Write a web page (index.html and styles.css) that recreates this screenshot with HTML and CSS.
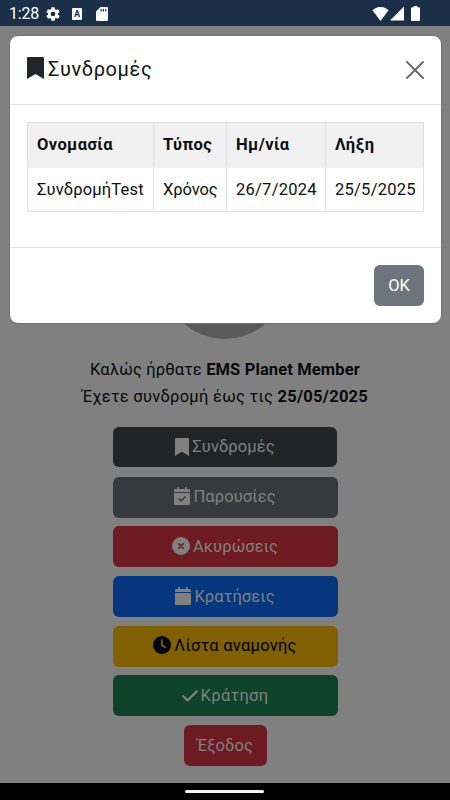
FILE: index.html
```html
<!DOCTYPE html>
<html lang="el">
<head>
<meta charset="utf-8">
<meta name="viewport" content="width=device-width, initial-scale=1">
<title>Συνδρομές</title>
<link rel="stylesheet" href="styles.css">
</head>
<body>
<header class="status">
  <span class="time">1:28</span>
  <svg class="gear" viewBox="2 2 20 20"><path fill-rule="evenodd" d="M19.14 12.94c.04-.3.06-.61.06-.94s-.02-.64-.07-.94l2.03-1.58c.18-.14.23-.41.12-.61l-1.92-3.32c-.12-.22-.37-.29-.59-.22l-2.39.96c-.5-.38-1.03-.7-1.62-.94l-.36-2.54c-.04-.24-.24-.41-.48-.41h-3.84c-.24 0-.43.17-.47.41l-.36 2.54c-.59.24-1.13.57-1.62.94l-2.39-.96c-.22-.08-.47 0-.59.22L2.74 8.87c-.12.21-.08.47.12.61l2.03 1.58c-.05.3-.09.63-.09.94s.02.64.07.94l-2.03 1.58c-.18.14-.23.41-.12.61l1.92 3.32c.12.22.37.29.59.22l2.39-.96c.5.38 1.03.7 1.62.94l.36 2.54c.05.24.24.41.48.41h3.84c.24 0 .44-.17.47-.41l.36-2.54c.59-.24 1.13-.56 1.62-.94l2.39.96c.22.08.47 0 .59-.22l1.92-3.32c.12-.22.07-.47-.12-.61zM12 15.3a3.3 3.3 0 1 1 0-6.6 3.3 3.3 0 0 1 0 6.6z"/></svg>
  <span class="lang">A</span>
  <svg class="sd" viewBox="0 0 12 14"><path fill-rule="evenodd" d="M4.5 0H10.7Q12 0 12 1.3V12.7Q12 14 10.7 14H1.3Q0 14 0 12.7V4.5zM4.5 2V4.5H5.7V2zM6.8 2V4.5H8V2zM9.1 2V4.5H10.3V2z"/></svg>
  <svg class="wifi" viewBox="0 0 16 14"><path d="M0 3.2C4.6-1.1 11.4-1.1 16 3.2L8 14z"/></svg>
  <svg class="cell" viewBox="0 0 14 14"><path d="M14 0V14H0z"/></svg>
  <svg class="battery" viewBox="0 0 9 15"><path d="M2.7 0H6.3V1.3H8Q9 1.3 9 2.3V14Q9 15 8 15H1Q0 15 0 14V2.3Q0 1.3 1 1.3H2.7z"/></svg>
</header>

<main class="page">
  <div class="avatar"></div>
  <p class="welcome"><span class="w1">Καλώς ήρθατε <b>EMS Planet Member</b></span><span class="w2">Έχετε συνδρομή έως τις <b>25/05/2025</b></span></p>
  <nav class="actions">
    <button class="btn dark"><svg class="i-mark" viewBox="0 0 14 18"><path d="M0 1Q0 0 1 0H13Q14 0 14 1V18L7 13.7 0 18z"/></svg><span>Συνδρομές</span></button>
    <button class="btn grey"><svg class="i-cal" viewBox="0 0 16 18"><path fill-rule="evenodd" d="M3.3 0H5V2H11V0H12.7V2H14.7Q16 2 16 3.5V5H0V3.5Q0 2 1.3 2H3.3zM0 6H16V16.4Q16 18 14.4 18H1.6Q0 18 0 16.4z"/><path class="cut" d="M5 11.8L7.3 14 11.3 9.8"/></svg><span>Παρουσίες</span></button>
    <button class="btn red"><svg class="i-round" viewBox="0 0 18 18"><circle cx="9" cy="9" r="9"/><path class="cut" d="M6.9 6.9L11.1 11.1M11.1 6.9L6.9 11.1"/></svg><span>Ακυρώσεις</span></button>
    <button class="btn blue"><svg class="i-cal" viewBox="0 0 16 18"><path d="M3.3 0H5V2H11V0H12.7V2H14.7Q16 2 16 3.5V5H0V3.5Q0 2 1.3 2H3.3zM0 6H16V16.4Q16 18 14.4 18H1.6Q0 18 0 16.4z"/></svg><span>Κρατήσεις</span></button>
    <button class="btn yellow"><svg class="i-round" viewBox="0 0 18 18"><circle cx="9" cy="9" r="9"/><path class="cut" d="M8.8 4V9.2L12.2 11.3"/></svg><span class="wait">Λίστα αναμονής</span></button>
    <button class="btn green"><svg class="i-check" viewBox="0 0 16 12"><path d="M1.2 6.2L5.5 10.5 14.8 1.2"/></svg><span class="book">Κράτηση</span></button>
    <button class="btn red exit"><span>Έξοδος</span></button>
  </nav>
</main>
<footer class="navbar"><span class="pill"></span></footer>

<section class="modal">
  <div class="m-head">
    <svg class="m-mark" viewBox="0 0 17 22"><path d="M0 1.2Q0 0 1.2 0H15.8Q17 0 17 1.2V22L8.5 17 0 22z"/></svg>
    <h1>Συνδρομές</h1>
    <svg class="close" viewBox="0 0 18 18"><path d="M1 1L17 17M17 1L1 17"/></svg>
  </div>
  <div class="m-body">
    <table>
      <colgroup><col class="c1"><col class="c2"><col class="c3"><col class="c4"></colgroup>
      <tr><th>Ονομασία</th><th>Τύπος</th><th>Ημ/νία</th><th>Λήξη</th></tr>
      <tr><td class="name">ΣυνδρομήTest</td><td class="type">Χρόνος</td><td class="date">26/7/2024</td><td class="date">25/5/2025</td></tr>
    </table>
  </div>
  <div class="m-foot"><button class="ok">OK</button></div>
</section>
</body>
</html>
```
FILE: styles.css
```css
* { box-sizing: border-box; }
body {
  margin: 0;
  width: 450px;
  height: 800px;
  overflow: hidden;
  position: relative;
  display: flex;
  flex-direction: column;
  background: #808080;
  color: #08090a;
  font: 400 16.5px/26px Roboto, "Noto Sans", sans-serif;
}
svg { display: block; flex: none; fill: currentColor; }
button { font: inherit; border: 0; padding: 0; }
span { white-space: nowrap; }

.status { height: 26px; flex: none; display: flex; align-items: center; background: #1b3048; color: #fff; padding: 1px 30px 0 9px; }
.time { width: 37px; font-size: 16px; letter-spacing: -.2px; }
.gear { width: 14px; height: 14px; }
.lang { width: 10px; height: 12px; margin-left: 12px; background: #fff; color: #1b3048; border-radius: 1px; font: bold 9px/12px Roboto, sans-serif; text-align: center; }
.sd { width: 12px; height: 14px; margin-left: 14px; }
.wifi { width: 17px; height: 14px; margin-left: auto; }
.cell { width: 14px; height: 15px; margin-left: 1px; }
.battery { width: 9px; height: 15px; margin-left: 7px; }

.page { flex: 1; min-height: 0; display: flex; flex-direction: column; align-items: center; padding-top: 191px; }
.avatar { width: 122px; height: 122px; flex: none; border-radius: 50%; background: #5a5a5a; }
.welcome { margin: 18px 0 17px; display: flex; flex-direction: column; align-items: center; line-height: 26.5px; }
.w1 { letter-spacing: .13px; }
.w2 { letter-spacing: .27px; }
.actions { display: flex; flex-direction: column; align-items: center; gap: 8.7px; }
.btn { width: 225px; height: 41px; flex: none; display: flex; align-items: center; justify-content: center; gap: 3px; border-radius: 6px; color: #808080; letter-spacing: .1px; }
.dark { background: #212426; width: 224px; height: 40px; margin-bottom: 1px; }
.grey { background: #363a3f; }
.red { background: #6e1a22; }
.blue { background: #06377e; }
.yellow { background: #806003; color: #000; }
.green { background: #0c432a; }
.exit { width: 83px; }
.wait { letter-spacing: .25px; }
.book { letter-spacing: .3px; }
.i-mark { width: 14px; height: 18px; }
.i-cal { width: 16px; height: 18px; margin-bottom: 2px; }
.i-round { width: 18px; height: 18px; margin-bottom: 2px; }
.i-check { width: 16px; height: 12px; }
.i-check path { fill: none; stroke: currentColor; stroke-width: 2.2; stroke-linecap: round; stroke-linejoin: round; }
.cut { fill: none; stroke: #363a3f; stroke-width: 1.5; stroke-linecap: round; stroke-linejoin: round; }
.red .cut { stroke: #6e1a22; stroke-width: 1.8; }
.yellow .cut { stroke: #806003; stroke-width: 1.8; }

.navbar { height: 17.5px; flex: none; display: flex; justify-content: center; padding: 7.5px 1px 0 0; background: #000; }
.pill { width: 79px; height: 3px; border-radius: 2px; background: #f5f3f2; }

.modal { position: absolute; left: 9px; top: 35px; width: 433px; height: 289px; border: 1px solid #707070; border-radius: 9px; background: #fff; color: #212529; display: flex; flex-direction: column; }
.m-head { height: 69px; flex: none; display: flex; align-items: center; padding: 0 17px 2px 17px; border-bottom: 1px solid #dee2e6; }
.m-mark { width: 17px; height: 22px; margin-bottom: 2px; }
.m-head h1 { margin: 0 0 0 4px; font-size: 20px; font-weight: 400; line-height: 30px; letter-spacing: .6px; color: #111416; }
.close { width: 18px; height: 18px; margin: 1px 0 0 auto; }
.close path { fill: none; stroke: #666; stroke-width: 1.8; stroke-linecap: round; }
.m-body { flex: 1; padding: 17px 17px 0 17px; }
table { width: 397px; border-collapse: collapse; table-layout: fixed; }
.c1 { width: 126px; }
.c2 { width: 73px; }
.c3 { width: 99px; }
.c4 { width: 98px; }
th, td { border: 1px solid #dee2e6; padding: 0 0 0 9px; text-align: left; height: 44px; color: #0d0f11; }
th { height: 45px; background: #f1f1f1; border-bottom-color: #f1f1f1; font-weight: 700; letter-spacing: .4px; }
.name { letter-spacing: .15px; }
.type { letter-spacing: -.1px; }
.date { letter-spacing: .25px; }
.m-foot { height: 76px; flex: none; border-top: 1px solid #dee2e6; display: flex; justify-content: flex-end; padding: 17px 17px 0 0; }
.ok { width: 50px; height: 41px; border-radius: 6px; background: #6c757d; color: #fff; }
```
